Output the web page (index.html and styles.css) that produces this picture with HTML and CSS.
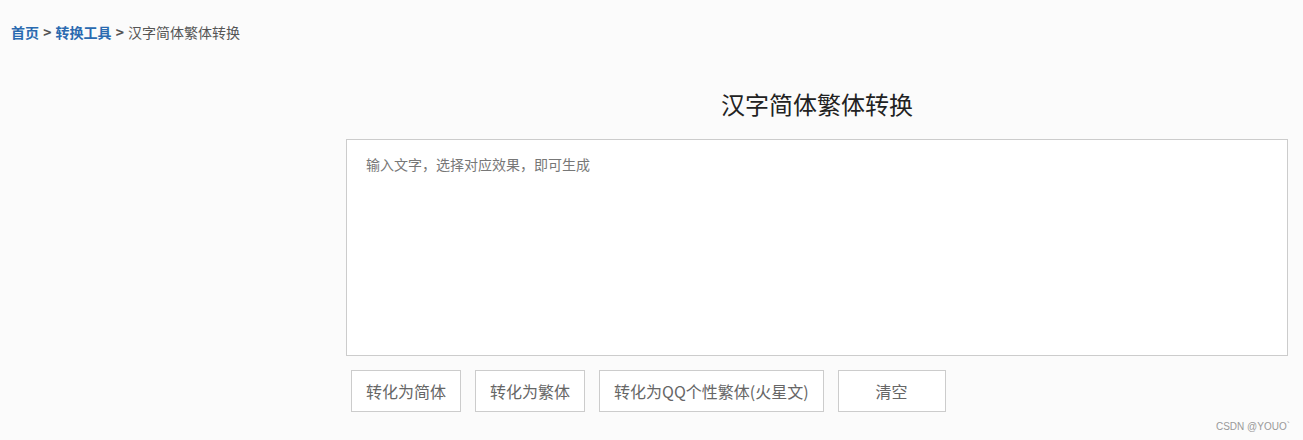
FILE: index.html
```html
<!DOCTYPE html>
<html lang="zh">
<head>
<meta charset="utf-8">
<title>汉字简体繁体转换</title>
<link rel="stylesheet" href="styles.css">
</head>
<body>
<div class="crumbs"><a class="link" href="#">首页</a> <span class="sep">&gt;</span> <a class="link" href="#">转换工具</a> <span class="sep">&gt;</span> <span class="cur">汉字简体繁体转换</span></div>
<div class="main">
  <h1 class="title">汉字简体繁体转换</h1>
  <textarea class="input" placeholder="输入文字，选择对应效果，即可生成"></textarea>
  <div class="btns">
    <button class="btn">转化为简体</button>
    <button class="btn">转化为繁体</button>
    <button class="btn">转化为QQ个性繁体(火星文)</button>
    <button class="btn btn-clear">清空</button>
  </div>
</div>
<div class="mark">CSDN @YOUO`</div>
</body>
</html>
```
FILE: styles.css
```css
html, body {
  margin: 0;
  padding: 0;
  height: 100%;
}
body {
  background: #fbfbfb;
  font-family: "Noto Sans CJK SC", "Noto Sans", sans-serif;
  color: #333;
  position: relative;
  overflow: hidden;
}
.crumbs {
  padding: 22px 11px 0;
  font-size: 14px;
  line-height: 20px;
  height: 20px;
  color: #555;
}
.link {
  color: #2a6ab0;
  font-weight: bold;
  text-decoration: none;
}
.sep {
  color: #555;
  font-weight: bold;
  margin: 0 1px;
}
.cur {
  color: #555;
}
.main {
  margin-left: 346px;
  width: 942px;
}
.title {
  margin: 46px 0 19px;
  font-size: 24px;
  line-height: 32px;
  font-weight: normal;
  text-align: center;
  color: #222;
}
.input {
  display: block;
  box-sizing: border-box;
  width: 942px;
  height: 217px;
  margin: 0;
  padding: 14px 19px;
  border: 1px solid #cccccc;
  background: #fff;
  font-family: inherit;
  font-size: 14px;
  line-height: 20px;
  resize: none;
  outline: none;
}
.input::placeholder {
  color: #777;
}
.btns {
  display: flex;
  gap: 14px;
  margin: 14px 0 0 5px;
}
.btn {
  box-sizing: border-box;
  height: 42px;
  padding: 0 14px;
  border: 1px solid #cccccc;
  background: #fff;
  font-family: inherit;
  font-size: 16px;
  color: #666;
  cursor: pointer;
}
.btn-clear {
  width: 108px;
}
.mark {
  position: absolute;
  right: 13px;
  bottom: 8px;
  font-family: "Liberation Sans", Arial, sans-serif;
  font-size: 10px;
  color: #999;
}
```
